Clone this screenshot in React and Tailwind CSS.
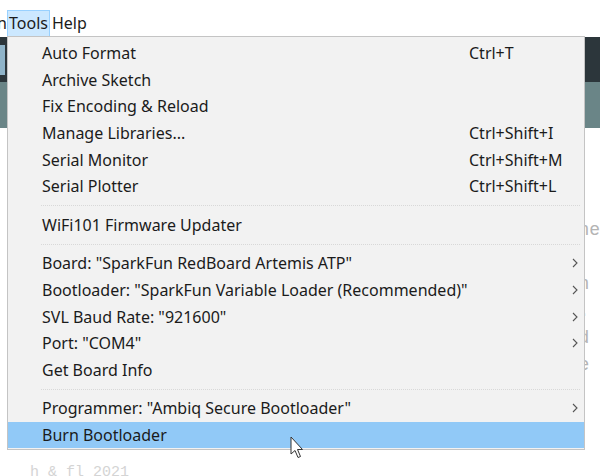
const ITEMS = [
  { label: 'Auto Format', key: 'Ctrl+T' },
  { label: 'Archive Sketch' },
  { label: 'Fix Encoding & Reload' },
  { label: 'Manage Libraries...', key: 'Ctrl+Shift+I' },
  { label: 'Serial Monitor', key: 'Ctrl+Shift+M' },
  { label: 'Serial Plotter', key: 'Ctrl+Shift+L' },
  { sep: true },
  { label: 'WiFi101 Firmware Updater' },
  { sep: true },
  { label: 'Board: "SparkFun RedBoard Artemis ATP"', sub: true },
  { label: 'Bootloader: "SparkFun Variable Loader (Recommended)"', sub: true },
  { label: 'SVL Baud Rate: "921600"', sub: true },
  { label: 'Port: "COM4"', sub: true },
  { label: 'Get Board Info' },
  { sep: true },
  { label: 'Programmer: "Ambiq Secure Bootloader"', sub: true },
  { label: 'Burn Bootloader', active: true },
]

const EDITOR_RIGHT = ['ne', '', 'n', '.', 'd', 'e']

function Chevron() {
  return (
    <svg width="6" height="10" viewBox="0 0 6 10" fill="none" stroke="#555" strokeWidth="1.1">
      <polyline points="1,1 5,5 1,9" />
    </svg>
  )
}

function Cursor() {
  return (
    <svg width="14" height="23" viewBox="0 0 14 23" className="absolute left-[290px] top-[436px]">
      <path d="M1 1 L1 18 L5 14.5 L8 21.5 L10.5 20.5 L7.5 13.5 L12.5 13.5 Z" fill="#fff" stroke="#333" strokeWidth="1" strokeLinejoin="round" />
    </svg>
  )
}

export default function App() {
  return (
    <div className="relative w-[600px] h-[476px] overflow-hidden bg-white font-['Noto_Sans',sans-serif] text-[#1b1b1b]">
      {/* title fragment cut at top */}
      <div className="h-[9px] overflow-hidden">
        <p className="-mt-[17px] pl-[40px] text-[15px] text-[#888]">Sketch Edit</p>
      </div>

      {/* menu bar */}
      <div className="h-[28px] flex items-center text-[16px] leading-none">
        <span className="w-[7px] overflow-hidden flex justify-end">n</span>
        <span className="h-[27px] flex items-center px-[1px] bg-[#cce8ff] border border-[#99d1ff]">Tools</span>
        <span className="ml-[2px]">Help</span>
      </div>

      {/* toolbar strip behind menu */}
      <div className="h-[45px] bg-[#2c363b] flex">
        <div className="w-[5px] mt-[8px] h-[30px] bg-[#8fb4c9]" />
      </div>
      <div className="h-[46px] bg-[#6a8587]" />

      {/* editor behind menu */}
      <div className="flex pt-[89px] font-['Liberation_Mono',monospace] text-[18px] text-[#b4b4b4]">
        <div className="w-[586px]" />
        <div className="flex flex-col">
          {EDITOR_RIGHT.map((t, i) => (
            <div key={i} className="h-[27px] leading-[27px]">{t}</div>
          ))}
        </div>
      </div>
      <p className="absolute left-[30px] top-[462px] font-['Liberation_Mono',monospace] text-[15px] text-[#d4d4d4]">h &amp; fl  2021</p>

      {/* dropdown */}
      <div className="absolute left-[7px] top-[36px] w-[578px] bg-[#f2f2f2] border border-[#c4c4c4] pt-[3px] pb-[1px] text-[16px]">
        {ITEMS.map((it, i) =>
          it.sep ? (
            <div key={i} className="h-[12px] flex items-center pl-[33px] pr-[4px]">
              <div className="flex-1 border-t border-dotted border-[#d8d8d8]" />
            </div>
          ) : (
            <div key={i} className={`h-[26.6px] flex items-center whitespace-nowrap ${it.active ? 'bg-[#91c9f7]' : ''}`}>
              <span className="w-[461px] pl-[34px]">{it.label}</span>
              <span className="flex-1">{it.key}</span>
              <span className="w-[12px] flex items-center">{it.sub && <Chevron />}</span>
            </div>
          )
        )}
      </div>

      <Cursor />
    </div>
  )
}
